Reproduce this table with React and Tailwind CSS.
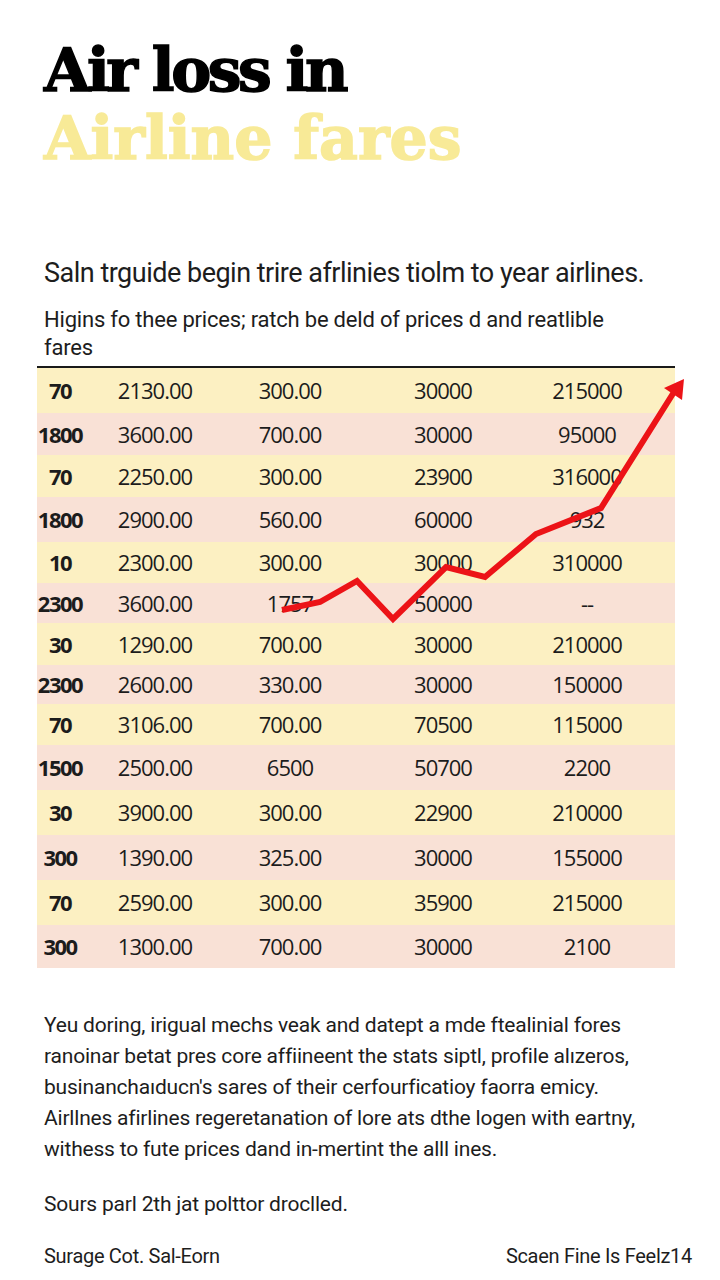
import React from 'react';

// filas de la tabla: [col1, col2, col3, col4, col5, alto]
const rows = [
  ['70', '2130.00', '300.00', '30000', '215000', 45],
  ['1800', '3600.00', '700.00', '30000', '95000', 42],
  ['70', '2250.00', '300.00', '23900', '316000', 42],
  ['1800', '2900.00', '560.00', '60000', '932', 45],
  ['10', '2300.00', '300.00', '30000', '310000', 41],
  ['2300', '3600.00', '1757', '50000', '--', 40],
  ['30', '1290.00', '700.00', '30000', '210000', 42],
  ['2300', '2600.00', '330.00', '30000', '150000', 39],
  ['70', '3106.00', '700.00', '70500', '115000', 41],
  ['1500', '2500.00', '6500', '50700', '2200', 45],
  ['30', '3900.00', '300.00', '22900', '210000', 45],
  ['300', '1390.00', '325.00', '30000', '155000', 45],
  ['70', '2590.00', '300.00', '35900', '215000', 45],
  ['300', '1300.00', '700.00', '30000', '2100', 43],
];

const sans = { fontFamily: 'Roboto, "Liberation Sans", sans-serif' };
const nums = { fontFamily: '"Open Sans", "Liberation Sans", sans-serif' };
const slab = { fontFamily: '"DejaVu Serif", "Liberation Serif", serif' };

const FareRow = ({ row, index }) => {
  const [a, b, c, d, e, h] = row;
  return (
    <div
      className={`flex items-center text-[22px] text-[#1c1c1c] ${index % 2 === 0 ? 'bg-[#fcf0c2]' : 'bg-[#f9e1d6]'}`}
      style={{ height: h }}
    >
      <div className="w-[46px] text-center font-bold tracking-[-1.5px]">{a}</div>
      <div className="w-[144px] text-center tracking-[-1px]">{b}</div>
      <div className="w-[126px] text-center tracking-[-1px]">{c}</div>
      <div className="w-[180px] text-center tracking-[-1px]">{d}</div>
      <div className="w-[108px] text-center tracking-[-1px]">{e}</div>
    </div>
  );
};

export default function App() {
  return (
    <div className="w-[720px] h-[1280px] bg-white overflow-hidden relative">
      <div className="pl-[44px] pt-[36px]">
        <h1
          className="text-[60px] leading-[68px] font-black text-black tracking-[-3.5px] [-webkit-text-stroke:1.5px_black]"
          style={slab}
        >
          Air loss in
        </h1>
        <h1
          className="text-[60px] leading-[68px] font-black text-[#f8ea97] tracking-[0px] [-webkit-text-stroke:1.5px_#f8ea97]"
          style={slab}
        >
          Airline fares
        </h1>
      </div>

      <p className="mt-[85px] pl-[44px] text-[27px] leading-[32px] text-[#1d1d1d] tracking-[-0.5px]" style={sans}>
        Saln trguide begin trire afrlinies tiolm to year airlines.
      </p>
      <p className="mt-[17px] ml-[44px] w-[590px] text-[22px] leading-[28px] text-[#1d1d1d] tracking-[-0.2px]" style={sans}>
        Higins fo thee prices; ratch be deld of prices d and reatlible fares
      </p>

      <div className="relative mt-[4px] ml-[37px] w-[638px]" style={nums}>
        <div className="h-[2px] bg-[#1a1a1a]" />
        {rows.map((row, i) => (
          <FareRow key={i} row={row} index={i} />
        ))}
        {/* línea roja de tendencia */}
        <svg className="absolute left-[-37px] top-[-366px] pointer-events-none" width="720" height="1000" viewBox="0 0 720 1000">
          <polyline
            points="282,610 320,602 357,581 393,619 446,567 485,577 536,534 601,508 674,392"
            fill="none"
            stroke="#ec1317"
            strokeWidth="6"
            strokeLinejoin="miter"
          />
          <polygon points="684,379 664,388 682,400" fill="#ec1317" />
        </svg>
      </div>

      <div className="mt-[42px] pl-[44px] text-[21px] leading-[31px] text-[#1d1d1d] tracking-[-0.2px]" style={sans}>
        <p>Yeu doring, irigual mechs veak and datept a mde ftealinial fores</p>
        <p>ranoinar betat pres core affiineent the stats siptl, profile alızeros,</p>
        <p>businanchaıducn's sares of their cerfourficatioy faorra emicy.</p>
        <p>Airllnes afirlines regeretanation of lore ats dthe logen with eartny,</p>
        <p>withess to fute prices dand in-mertint the alll ines.</p>
        <p className="mt-[24px]">Sours parl 2th jat polttor droclled.</p>
      </div>

      <div className="mt-[22px] pl-[44px] pr-[28px] flex justify-between text-[20px] leading-[28px] text-[#1d1d1d] tracking-[-0.3px]" style={sans}>
        <span>Surage Cot. Sal-Eorn</span>
        <span>Scaen Fine Is Feelz14</span>
      </div>
    </div>
  );
}
